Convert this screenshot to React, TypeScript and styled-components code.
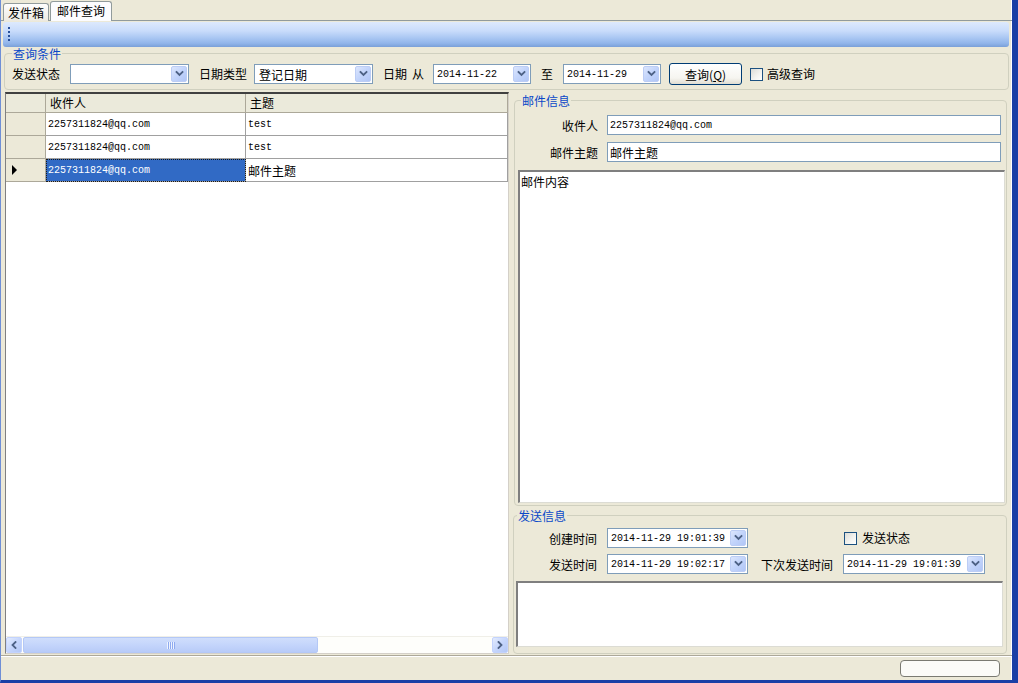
import React from "react"
import styled, { createGlobalStyle } from "styled-components"

const CJK = `"Noto Sans CJK SC", "Noto Sans", sans-serif`
const MONO = `"Liberation Mono", "DejaVu Sans Mono", "Noto Sans CJK SC", monospace`

const GlobalStyle = createGlobalStyle`
  html, body { margin: 0; padding: 0; background: #ece9d8; overflow: hidden; }
  body { font-family: ${CJK}; font-size: 12px; color: #000; }
  * { box-sizing: border-box; }
`

const Chevron: React.FC<{ dir?: "down" | "left" | "right" }> = ({ dir = "down" }) => {
  const d =
    dir === "down" ? "M1.5 2 L4.5 5 L7.5 2" : dir === "left" ? "M5.5 1 L2.5 4 L5.5 7" : "M2.5 1 L5.5 4 L2.5 7"
  return (
    <svg width="9" height="8" viewBox="0 0 9 8">
      <path d={d} fill="none" stroke="#4d6185" strokeWidth="1.8" strokeLinecap="square" />
    </svg>
  )
}

export default function App() {
  return (
    <>
      <GlobalStyle />
      <Window>
        <TabStrip>
          <Tab>发件箱</Tab>
          <Tab $active>邮件查询</Tab>
        </TabStrip>

        <ToolStrip>
          <Grip />
        </ToolStrip>

        <QueryGroup>
          <Legend>查询条件</Legend>
          <QueryRow>
            <Label>发送状态</Label>
            <Combo $w={119} $ml={10}>
              <ComboText />
              <DropBtn><Chevron /></DropBtn>
            </Combo>
            <Label $ml={10}>日期类型</Label>
            <Combo $w={119} $ml={7}>
              <ComboText>登记日期</ComboText>
              <DropBtn><Chevron /></DropBtn>
            </Combo>
            <Label $ml={10}>日期</Label>
            <Label $ml={5}>从</Label>
            <Combo $w={98} $ml={9}>
              <ComboText $mono>2014-11-22</ComboText>
              <DropBtn><Chevron /></DropBtn>
            </Combo>
            <Label $ml={10}>至</Label>
            <Combo $w={98} $ml={10}>
              <ComboText $mono>2014-11-29</ComboText>
              <DropBtn><Chevron /></DropBtn>
            </Combo>
            <Button>查询(<u>Q</u>)</Button>
            <Check $ml={8} />
            <Label $ml={4}>高级查询</Label>
          </QueryRow>
        </QueryGroup>

        <Main>
          <GridPane>
            <Table>
              <HeadCell />
              <HeadCell>收件人</HeadCell>
              <HeadCell>主题</HeadCell>

              <RowHead />
              <Cell $mono>2257311824@qq.com</Cell>
              <Cell $mono>test</Cell>

              <RowHead />
              <Cell $mono>2257311824@qq.com</Cell>
              <Cell $mono>test</Cell>

              <RowHead>
                <svg width="6" height="10" viewBox="0 0 6 10">
                  <path d="M0 0 L5 5 L0 10 Z" fill="#000" />
                </svg>
              </RowHead>
              <Cell $mono $selected>2257311824@qq.com</Cell>
              <Cell>邮件主题</Cell>
            </Table>
            <GridFill />
            <HScroll>
              <ScrollBtn><Chevron dir="left" /></ScrollBtn>
              <Thumb>
                <GripLines />
              </Thumb>
              <Track />
              <ScrollBtn><Chevron dir="right" /></ScrollBtn>
            </HScroll>
          </GridPane>

          <Splitter />

          <RightPane>
            <MailGroup>
              <Legend $ml={3}>邮件信息</Legend>
              <FieldGrid>
                <FieldLabel>收件人</FieldLabel>
                <TextBox $mono>2257311824@qq.com</TextBox>
                <FieldLabel>邮件主题</FieldLabel>
                <TextBox>邮件主题</TextBox>
              </FieldGrid>
              <TextArea $grow>邮件内容</TextArea>
            </MailGroup>

            <SendGroup>
              <Legend $ml={1}>发送信息</Legend>
              <SendGrid>
                <FieldLabel>创建时间</FieldLabel>
                <Combo $w={141}>
                  <ComboText $mono>2014-11-29 19:01:39</ComboText>
                  <DropBtn><Chevron /></DropBtn>
                </Combo>
                <span />
                <CheckLine>
                  <Check />
                  <Label $ml={5}>发送状态</Label>
                </CheckLine>

                <FieldLabel>发送时间</FieldLabel>
                <Combo $w={141}>
                  <ComboText $mono>2014-11-29 19:02:17</ComboText>
                  <DropBtn><Chevron /></DropBtn>
                </Combo>
                <FieldLabel>下次发送时间</FieldLabel>
                <Combo $w={142}>
                  <ComboText $mono>2014-11-29 19:01:39</ComboText>
                  <DropBtn><Chevron /></DropBtn>
                </Combo>
              </SendGrid>
              <TextArea $h={66} />
            </SendGroup>
          </RightPane>
        </Main>

        <StatusBar>
          <StatusPanel />
        </StatusBar>
      </Window>
    </>
  )
}

const Window = styled.div`
  width: 1018px;
  height: 683px;
  display: flex;
  flex-direction: column;
  background: #ece9d8;
  border-left: 1px solid #6f8fd6;
  border-right: 6px solid #1a3fa6;
  border-bottom: 3px solid #1a3fa6;
  box-shadow: inset -1px 0 0 #fff;
`

const TabStrip = styled.div`
  height: 21px;
  display: flex;
  align-items: flex-end;
  gap: 1px;
  padding-left: 2px;
  border-bottom: 1px solid #919b9c;
`

const Tab = styled.div<{ $active?: boolean }>`
  height: ${(p) => (p.$active ? 20 : 18)}px;
  margin-bottom: -1px;
  padding: 0 ${(p) => (p.$active ? 6 : 4)}px;
  border: 1px solid #919b9c;
  border-bottom: none;
  border-radius: 3px 3px 0 0;
  background: ${(p) => (p.$active ? "#fcfcfe" : "linear-gradient(#fefefe, #ece9e0)")};
  font-size: 12px;
  line-height: 17px;
  white-space: nowrap;
`

const ToolStrip = styled.div`
  height: 25px;
  margin: 1px 3px 0 2px;
  border-radius: 3px;
  background: linear-gradient(to bottom, #dde9fd 0%, #c9dcfb 35%, #abc8f3 62%, #91b5ea 85%, #7aa0d8 100%);
  display: flex;
  align-items: center;
  padding-left: 5px;
`

const Grip = styled.div`
  width: 2px;
  height: 15px;
  background: repeating-linear-gradient(to bottom, #27509c 0 2px, transparent 2px 4px);
`

const Legend = styled.legend<{ $ml?: number }>`
  color: #0a48c8;
  font-size: 12px;
  line-height: 13px;
  padding: 0 1px;
  margin-left: ${(p) => p.$ml ?? 0}px;
`

const QueryGroup = styled.fieldset`
  margin: 0 3px 0 3px;
  min-width: 0;
  border: 1px solid #d0d0bf;
  border-radius: 4px;
  padding: 3px 6px 4px 7px;
`

const QueryRow = styled.div`
  display: flex;
  align-items: center;
  height: 22px;
`

const Label = styled.span<{ $ml?: number }>`
  margin-left: ${(p) => p.$ml ?? 0}px;
  font-size: 12px;
  line-height: 14px;
  white-space: nowrap;
`

const Combo = styled.div<{ $w: number; $ml?: number }>`
  width: ${(p) => p.$w}px;
  height: 20px;
  margin-left: ${(p) => p.$ml ?? 0}px;
  border: 1px solid #7f9db9;
  background: #fff;
  display: flex;
  align-items: center;
  padding: 1px;
`

const ComboText = styled.span<{ $mono?: boolean }>`
  flex: 1;
  padding-left: ${(p) => (p.$mono ? 2 : 3)}px;
  font-family: ${(p) => (p.$mono ? MONO : CJK)};
  font-size: ${(p) => (p.$mono ? 10 : 12)}px;
  white-space: nowrap;
  overflow: hidden;
`

const DropBtn = styled.span`
  width: 16px;
  height: 16px;
  border: 1px solid #bccdf5;
  border-radius: 2px;
  background: linear-gradient(135deg, #dce6fd 0%, #c2d4fb 50%, #b1c6f6 100%);
  display: flex;
  align-items: center;
  justify-content: center;
`

const Button = styled.button`
  width: 73px;
  height: 22px;
  margin-left: 8px;
  padding: 0;
  border: 1px solid #003c74;
  border-radius: 3px;
  background: linear-gradient(#ffffff 0%, #f6f5f0 70%, #e0ddd2 100%);
  font-family: ${CJK};
  font-size: 12px;
  color: #000;
`

const Check = styled.span<{ $ml?: number }>`
  display: inline-block;
  width: 13px;
  height: 13px;
  margin-left: ${(p) => p.$ml ?? 0}px;
  border: 1px solid #1c5180;
  background: linear-gradient(135deg, #dcdcd7 0%, #f4f4f0 60%, #ffffff 100%);
`

const Main = styled.div`
  flex: 1;
  min-height: 0;
  display: flex;
  padding: 2px 2px 1px 4px;
`

const GridPane = styled.div`
  width: 504px;
  display: flex;
  flex-direction: column;
  background: #fff;
  border-style: solid;
  border-width: 2px 1px 1px 1px;
  border-color: #404040 #d4d0c8 #d4d0c8 #808080;
`

const Table = styled.div`
  display: grid;
  grid-template-columns: 40px 200px 1fr;
  grid-template-rows: 19px repeat(3, 23px);
`

const HeadCell = styled.div`
  background: #ebeadb;
  border-right: 1px solid #aca899;
  border-bottom: 1px solid #aca899;
  padding-left: 4px;
  font-size: 12px;
  line-height: 17px;
  white-space: nowrap;
`

const RowHead = styled.div`
  background: #ece9d8;
  border-right: 1px solid #aca899;
  border-bottom: 1px solid #aca899;
  display: flex;
  align-items: center;
  padding-left: 6px;
`

const Cell = styled.div<{ $mono?: boolean; $selected?: boolean }>`
  border-right: 1px solid #a0a0a0;
  border-bottom: 1px solid #a0a0a0;
  padding-left: 2px;
  display: flex;
  align-items: center;
  font-family: ${(p) => (p.$mono ? MONO : CJK)};
  font-size: ${(p) => (p.$mono ? 10 : 12)}px;
  white-space: nowrap;
  background: ${(p) => (p.$selected ? "#316ac5" : "#fff")};
  color: ${(p) => (p.$selected ? "#fff" : "#000")};
  outline: ${(p) => (p.$selected ? "1px dotted #1a1a1a" : "none")};
  outline-offset: -1px;
`

const GridFill = styled.div`
  flex: 1;
  background: #fff;
`

const HScroll = styled.div`
  height: 17px;
  display: flex;
  background: #fefefb;
  border-top: 1px solid #f0efe8;
`

const ScrollBtn = styled.div`
  width: 16px;
  height: 16px;
  border: 1px solid #c3d3fd;
  border-radius: 2px;
  background: linear-gradient(135deg, #e3ebfe 0%, #c6d6fc 50%, #b4c8f6 100%);
  display: flex;
  align-items: center;
  justify-content: center;
`

const Thumb = styled.div`
  width: 295px;
  height: 16px;
  margin-left: 1px;
  border: 1px solid #b4c8f6;
  border-radius: 2px;
  background: linear-gradient(to bottom, #d0defc 0%, #c4d5fb 50%, #b8cbf8 100%);
  display: flex;
  align-items: center;
  justify-content: center;
`

const GripLines = styled.div`
  width: 8px;
  height: 7px;
  background: repeating-linear-gradient(to right, #eef3fe 0 1px, #8eaaf0 1px 2px);
`

const Track = styled.div`
  flex: 1;
`

const Splitter = styled.div`
  width: 4px;
`

const RightPane = styled.div`
  flex: 1;
  display: flex;
  flex-direction: column;
  gap: 3px;
  padding: 2px 3px 0 0;
`

const MailGroup = styled.fieldset`
  flex: 1;
  min-height: 0;
  margin: 0 0 0 1px;
  min-width: 0;
  border: 1px solid #d0d0bf;
  border-radius: 4px;
  padding: 8px 1px 2px 3px;
  display: flex;
  flex-direction: column;
`

const FieldGrid = styled.div`
  display: grid;
  grid-template-columns: 80px 1fr;
  column-gap: 9px;
  row-gap: 7px;
  align-items: center;
  margin-right: 4px;
`

const FieldLabel = styled.span`
  justify-self: end;
  font-size: 12px;
  white-space: nowrap;
`

const TextBox = styled.div<{ $mono?: boolean }>`
  height: 20px;
  border: 1px solid #7f9db9;
  background: #fff;
  padding-left: 2px;
  display: flex;
  align-items: center;
  font-family: ${(p) => (p.$mono ? MONO : CJK)};
  font-size: ${(p) => (p.$mono ? 10 : 12)}px;
`

const TextArea = styled.div<{ $grow?: boolean; $h?: number }>`
  ${(p) => (p.$grow ? "flex: 1; min-height: 0;" : `height: ${p.$h}px;`)}
  margin-top: ${(p) => (p.$grow ? 8 : 7)}px;
  background: #fff;
  border-style: solid;
  border-width: 2px 1px 1px 2px;
  border-color: #7f7f7f #dcdcd4 #dcdcd4 #7f7f7f;
  padding: 2px 1px;
  font-size: 12px;
  line-height: 16px;
`

const SendGroup = styled.fieldset`
  height: 145px;
  margin: 0;
  min-width: 0;
  border: 1px solid #d0d0bf;
  border-radius: 4px;
  padding: 6px 3px 3px 2px;
  display: flex;
  flex-direction: column;
`

const SendGrid = styled.div`
  display: grid;
  grid-template-columns: 81px 141px 75px 142px;
  column-gap: 10px;
  row-gap: 6px;
  align-items: center;
`

const CheckLine = styled.div`
  display: flex;
  align-items: center;
  padding-left: 1px;
`

const StatusBar = styled.div`
  height: 25px;
  display: flex;
  align-items: center;
  justify-content: flex-end;
  padding-right: 12px;
  border-top: 1px solid #aca899;
  box-shadow: inset 0 1px 0 #fff;
`

const StatusPanel = styled.div`
  width: 100px;
  height: 17px;
  border: 1px solid #7a7a72;
  border-radius: 4px;
  background: #fbfbf8;
`
